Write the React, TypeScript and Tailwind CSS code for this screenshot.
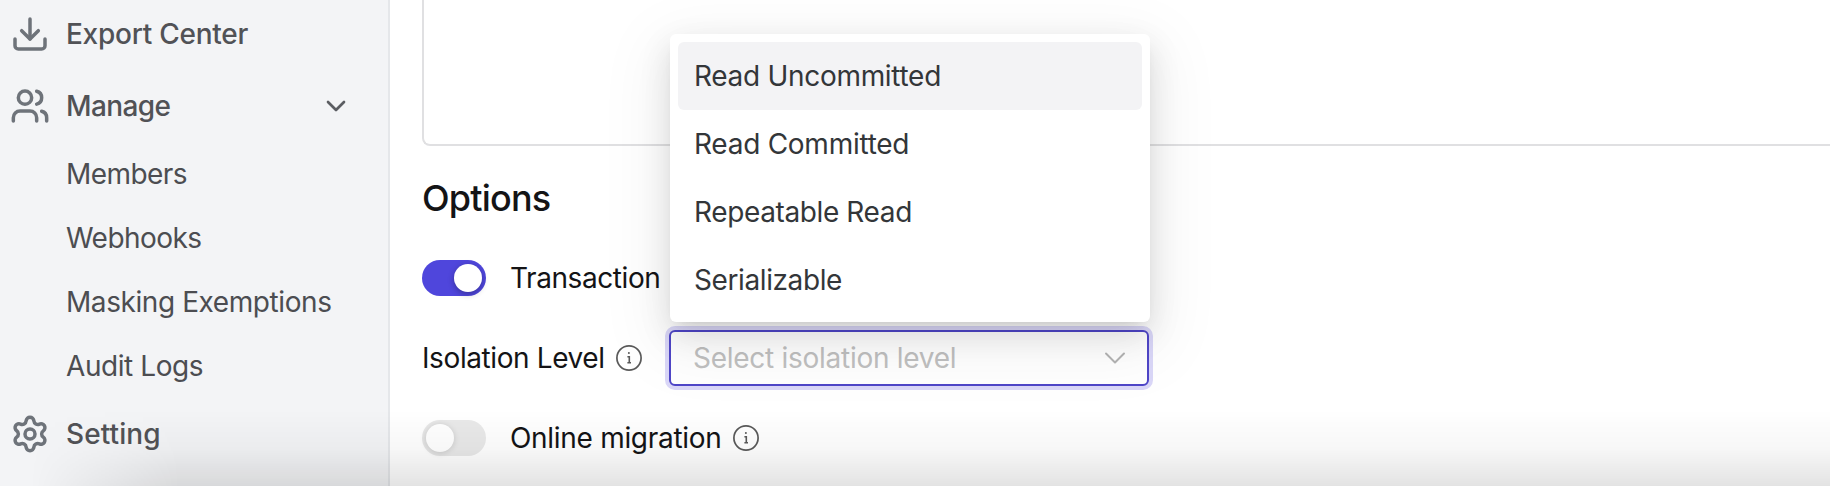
import { ChevronDown, Download, Settings, Users } from "lucide-react";
import type { LucideIcon } from "lucide-react";

function NavItem({
  icon: Icon,
  label,
  tracking,
  open,
}: {
  icon: LucideIcon;
  label: string;
  tracking: string;
  open?: boolean;
}) {
  return (
    <div className="flex h-[72px] items-center gap-4 pr-9 pl-[10px]">
      <Icon size={40} className="shrink-0 text-[#6e737a]" strokeWidth={2.1} />
      <span className={`text-[28px] font-[550] text-[#515256] ${tracking}`}>{label}</span>
      {open && <ChevronDown size={32} className="ml-auto text-[#5b5d62]" strokeWidth={2} />}
    </div>
  );
}

function SubItem({ label, tracking }: { label: string; tracking: string }) {
  return (
    <div className={`flex h-16 items-center pl-[66px] text-[28px] text-[#4c4d51] ${tracking}`}>{label}</div>
  );
}

function Toggle({ on }: { on?: boolean }) {
  return (
    <span
      className={
        on
          ? "flex h-9 w-16 items-center justify-end rounded-full bg-[#4f46dc] px-1"
          : "flex h-9 w-16 items-center rounded-full bg-[#e9e9e9] px-1"
      }
    >
      <span
        className={
          on
            ? "size-7 rounded-full bg-white shadow-[0_2px_6px_rgba(0,0,0,0.3)]"
            : "size-7 rounded-full bg-white shadow-[0_1px_6px_rgba(0,0,0,0.14)]"
        }
      />
    </span>
  );
}

function InfoIcon() {
  return (
    <svg width="26" height="26" viewBox="0 0 26 26" fill="none" className="block shrink-0 text-[#5a5a5a]">
      <circle cx="13" cy="13" r="12.1" stroke="currentColor" strokeWidth="1.7" />
      <circle cx="12.9" cy="8" r="1" fill="currentColor" />
      <path d="M11.4 11.8H13.3V17.6M11.4 17.8H15" stroke="currentColor" strokeWidth="1.6" />
    </svg>
  );
}

const levels = [
  { label: "Read Uncommitted", tracking: "tracking-[-0.3px]" },
  { label: "Read Committed", tracking: "tracking-[-0.26px]" },
  { label: "Repeatable Read", tracking: "tracking-[-0.38px]" },
  { label: "Serializable", tracking: "tracking-[-0.4px]" },
];

export default function App() {
  return (
    <div className="relative flex h-[486px] w-[1830px] overflow-hidden bg-white font-['Inter',sans-serif]">
      <aside className="-mt-0.5 w-[390px] shrink-0 border-r-2 border-[#e5e7ea] bg-[#f3f4f6]">
        <NavItem icon={Download} label="Export Center" tracking="tracking-[-0.26px]" />
        <NavItem icon={Users} label="Manage" tracking="tracking-[-0.6px]" open />
        <SubItem label="Members" tracking="tracking-[-0.55px]" />
        <SubItem label="Webhooks" tracking="tracking-[-0.55px]" />
        <SubItem label="Masking Exemptions" tracking="tracking-[-0.42px]" />
        <SubItem label="Audit Logs" tracking="tracking-[-0.42px]" />
        <NavItem icon={Settings} label="Setting" tracking="tracking-[0.1px]" />
      </aside>

      <main className="flex min-w-0 flex-1 flex-col pl-8 text-[28px] text-[#141416]">
        <div className="h-[146px] shrink-0 rounded-bl-[8px] border-b-2 border-l-2 border-[#e0e0e2]" />
        <h2 className="mt-7 h-12 text-[36px] leading-[48px] font-[550] tracking-[-0.8px]">Options</h2>
        <div className="mt-6 flex h-16 items-center gap-6">
          <Toggle on />
          <span className="tracking-[-0.42px]">Transaction</span>
        </div>
        <div className="mt-5 flex h-14 items-center">
          <span className="w-[183px] tracking-[-0.4px] whitespace-nowrap">Isolation Level</span>
          <span className="ml-[11px]">
            <InfoIcon />
          </span>
          <div className="relative ml-[27px] flex h-14 w-[480px] items-center justify-between rounded-md border-2 border-[#4f46c8] bg-white pr-[14px] pl-[22px] text-[#c0c0c0] shadow-[0_0_0_4px_#dad7f8]">
            <span className="tracking-[-0.27px]">Select isolation level</span>
            <ChevronDown size={36} strokeWidth={1.3} className="text-[#b4b4b4]" />
            <div className="absolute bottom-[62px] -left-px z-10 w-[480px] rounded-md bg-white p-2 text-[#333639] shadow-[0_6px_12px_-8px_rgba(0,0,0,0.16),0_12px_32px_rgba(0,0,0,0.12),0_18px_64px_16px_rgba(0,0,0,0.05)]">
              {levels.map(({ label, tracking }, i) => (
                <div
                  key={label}
                  className={`flex h-[68px] items-center px-4 ${tracking} ${i === 0 ? "rounded-md bg-[#f3f3f5]" : ""}`}
                >
                  {label}
                </div>
              ))}
            </div>
          </div>
        </div>
        <div className="mt-[34px] flex h-9 items-center gap-6">
          <Toggle />
          <span className="flex items-center gap-3 tracking-[-0.3px]">
            Online migration
            <InfoIcon />
          </span>
        </div>
      </main>

      <div className="pointer-events-none absolute inset-x-0 bottom-0 h-[76px] bg-linear-to-b from-transparent via-black/3 to-black/11 mask-[linear-gradient(to_right,transparent_30px,black_180px)]" />
    </div>
  );
}
